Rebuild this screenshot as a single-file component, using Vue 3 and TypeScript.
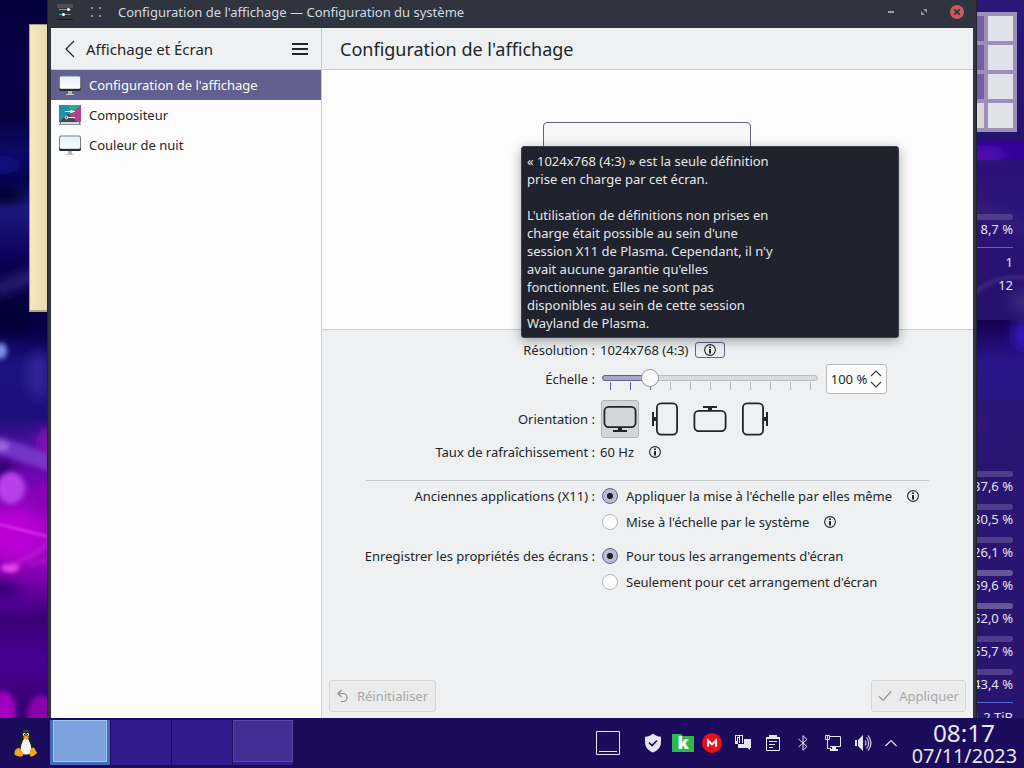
<script setup lang="ts">
interface Orientation {
  name: string
  rotation: number
  active: boolean
}

const sidebarItems = [
  { label: "Configuration de l'affichage", icon: 'monitor', active: true },
  { label: 'Compositeur', icon: 'compositor', active: false },
  { label: 'Couleur de nuit', icon: 'monitor', active: false },
]

const tooltipLines: string[] = [
  "L'utilisation de définitions non prises en",
  "charge était possible au sein d'une",
  "session X11 de Plasma. Cependant, il n'y",
  "avait aucune garantie qu'elles",
  'fonctionnent. Elles ne sont pas',
  'disponibles au sein de cette session',
  'Wayland de Plasma.',
]

const orientations: Orientation[] = [
  { name: 'normal', rotation: 0, active: true },
  { name: 'left', rotation: 90, active: false },
  { name: 'inverted', rotation: 180, active: false },
  { name: 'right', rotation: 270, active: false },
]

const ticks: number[] = Array.from({ length: 11 }, (_, i) => i)
const usage: string[] = ['37,6 %', '30,5 %', '26,1 %', '59,6 %', '52,0 %', '55,7 %', '43,4 %']
const pagerCells: boolean[] = [true, false, true, false, true, false, false, false]
</script>

<template>
  <div class="desktop">
    <svg class="wallpaper" width="1024" height="718" viewBox="0 0 1024 718">
      <defs>
        <linearGradient id="wl" x1="0" y1="0" x2="0" y2="1">
          <stop offset="0" stop-color="#04003a" />
          <stop offset="0.1" stop-color="#0a0048" />
          <stop offset="0.16" stop-color="#050040" />
          <stop offset="0.21" stop-color="#0d0a62" />
          <stop offset="0.25" stop-color="#06024a" />
          <stop offset="0.29" stop-color="#1c1a80" />
          <stop offset="0.36" stop-color="#0d0058" />
          <stop offset="0.42" stop-color="#05003c" />
          <stop offset="0.46" stop-color="#070048" />
          <stop offset="0.51" stop-color="#1a1382" />
          <stop offset="0.58" stop-color="#1c0f7a" />
          <stop offset="0.62" stop-color="#4a10a0" />
          <stop offset="0.67" stop-color="#7604b2" />
          <stop offset="0.72" stop-color="#a203c8" />
          <stop offset="0.77" stop-color="#a402c2" />
          <stop offset="0.81" stop-color="#7600a8" />
          <stop offset="0.86" stop-color="#3a0078" />
          <stop offset="0.92" stop-color="#4b0091" />
          <stop offset="1" stop-color="#32006c" />
        </linearGradient>
        <linearGradient id="wr" x1="0" y1="0" x2="0" y2="1">
          <stop offset="0" stop-color="#2a1878" />
          <stop offset="0.195" stop-color="#25136c" />
          <stop offset="0.2" stop-color="#32009a" />
          <stop offset="0.3" stop-color="#3c0b98" />
          <stop offset="0.45" stop-color="#170053" />
          <stop offset="0.5" stop-color="#281489" />
          <stop offset="0.56" stop-color="#2a1785" />
          <stop offset="1" stop-color="#281268" />
        </linearGradient>
        <filter id="b3" filterUnits="userSpaceOnUse" x="-40" y="0" width="1100" height="760"><feGaussianBlur stdDeviation="2.5" /></filter>
        <filter id="b5" filterUnits="userSpaceOnUse" x="-40" y="0" width="1100" height="760"><feGaussianBlur stdDeviation="6" /></filter>
        <filter id="b1" filterUnits="userSpaceOnUse" x="-40" y="0" width="1100" height="760"><feGaussianBlur stdDeviation="1" /></filter>
      </defs>
      <rect width="100" height="718" fill="url(#wl)" />
      <rect x="960" width="64" height="718" fill="url(#wr)" />
      <g filter="url(#b5)">
        <ellipse cx="2" cy="165" rx="20" ry="9" fill="#1218a0" opacity=".6" />
        <ellipse cx="5" cy="195" rx="18" ry="8" fill="#01002c" />
        <path d="M-5 285L50 262V276L-5 296z" fill="#3a2c8c" opacity=".8" />
        <ellipse cx="38" cy="375" rx="12" ry="24" fill="#34269c" opacity=".8" />
        <ellipse cx="12" cy="318" rx="20" ry="14" fill="#020034" />
        <ellipse cx="2" cy="468" rx="13" ry="7" fill="#23005f" />
        <ellipse cx="48" cy="445" rx="12" ry="18" fill="#8310b2" />
        <ellipse cx="14" cy="535" rx="26" ry="24" fill="#ba04d6" />
        <ellipse cx="12" cy="600" rx="22" ry="8" fill="#500096" />
        <ellipse cx="46" cy="500" rx="10" ry="16" fill="#8900b5" />
        <ellipse cx="2" cy="588" rx="17" ry="6" fill="#27006a" />
      </g>
      <g filter="url(#b3)">
        <path d="M-8 435Q24 443 56 458V473Q20 462 -8 451z" fill="#8040d0" opacity=".75" />
        <ellipse cx="1" cy="446" rx="8" ry="5" fill="#b27aef" opacity=".7" />
        <ellipse cx="11" cy="488" rx="14" ry="16" fill="#b740ea" />
        <ellipse cx="1" cy="351" rx="6" ry="8" fill="#7f90e8" />
        <ellipse cx="3" cy="711" rx="13" ry="20" fill="#a000bd" />
        <ellipse cx="42" cy="716" rx="15" ry="21" fill="#8800ad" />
        <ellipse cx="10" cy="568" rx="9" ry="4" fill="#ff50f6" />
        <path d="M8 566Q34 558 52 540" fill="none" stroke="#c520dd" stroke-width="3" />
        <path d="M28 566Q38 561 52 560" fill="none" stroke="#a719c9" stroke-width="3" />
      </g>
      <path d="M-6 523L54 538" stroke="#e034ee" stroke-width="3" opacity=".75" filter="url(#b1)" />
      <g filter="url(#b5)">
        <ellipse cx="985" cy="155" rx="20" ry="6" fill="#5b19bc" />
        <ellipse cx="1022" cy="302" rx="11" ry="11" fill="#8a7ac8" />
        <ellipse cx="1024" cy="335" rx="12" ry="15" fill="#3919bd" />
        <path d="M960 198Q1000 206 1030 228V240Q1000 220 960 210z" fill="#6a46a8" />
        <ellipse cx="979" cy="425" rx="8" ry="9" fill="#5b12a0" />
      </g>
      <path d="M976 292Q996 274 1030 278" fill="none" stroke="#7459aa" stroke-width="5" filter="url(#b1)" />
    </svg>

    <div class="note"></div>

    <div class="pager">
      <span v-for="(dim, i) in pagerCells" :key="i" :class="['pager-cell', { dim, grey: i === 6 }]"></span>
    </div>

    <div class="monitor cpu">
      <div class="meter"></div>
      <div class="value first">8,7 %</div>
      <div class="rule"></div>
      <div class="value">1</div>
      <div class="value">12</div>
    </div>

    <div class="monitor disks">
      <div v-for="(u, i) in usage" :key="i" class="disk">
        <div class="meter"></div>
        <div class="disk-value">{{ u }}</div>
      </div>
      <div class="rule"></div>
      <div class="disk-value total">1,2 TiB</div>
    </div>

    <main class="window">
      <header class="titlebar">
        <svg class="app-icon" width="16" height="16" viewBox="0 0 16 16">
          <rect width="16" height="16" rx="1" fill="#2d3439" />
          <rect width="16" height="4" rx="1" fill="#4b5157" />
          <rect y="15" width="16" height="1" fill="#191d20" />
          <path d="M2 5.5h12" stroke="#3daee9" />
          <path d="M12 5.5h2M2 10.500h12" stroke="#778087" />
          <path d="M2 10.500h5" stroke="#3daee9" />
          <circle cx="11.500" cy="5.500" r="1.500" fill="#fff" />
          <circle cx="6.500" cy="10.500" r="1.500" fill="#fff" />
        </svg>
        <svg class="grip" width="12" height="12" viewBox="0 0 12 12" fill="#8e949d">
          <path d="M1 1h2v2H1zM9 1h2v2H9zM1 9h2v2H1zM9 9h2v2H9z" />
        </svg>
        <span class="window-title">Configuration de l'affichage — Configuration du système</span>
        <svg class="controls" width="80" height="16" viewBox="0 0 80 16">
          <rect x="4" y="7" width="6" height="2" fill="#9aa0a8" />
          <path d="M39 5h4v4zM37 7v4h4z" fill="#9299a1" />
          <circle cx="73" cy="8" r="7" fill="#cc575d" />
          <path d="M70.300 5.300l5.400 5.400M75.700 5.300l-5.400 5.400" stroke="#2f343f" stroke-width="1.700" />
        </svg>
      </header>

      <div class="body">
        <aside class="sidebar">
          <div class="side-head">
            <svg width="12" height="18" viewBox="0 0 12 18">
              <path d="M10 1L2 9l8 8" fill="none" stroke="#232629" stroke-width="1.200" />
            </svg>
            <span class="side-title">Affichage et Écran</span>
            <svg width="16" height="12" viewBox="0 0 16 12" fill="#232629">
              <path d="M0 0h16v2H0zM0 5h16v2H0zM0 10h16v2H0z" />
            </svg>
          </div>
          <div v-for="item in sidebarItems" :key="item.label" :class="['side-item', { active: item.active }]">
            <svg v-if="item.icon === 'monitor'" width="22" height="22" viewBox="0 0 22 22">
              <defs>
                <linearGradient id="scr" x1="0" y1="0" x2="0" y2="1">
                  <stop offset="0" stop-color="#e4f2fb" />
                  <stop offset="1" stop-color="#fdfdfe" />
                </linearGradient>
              </defs>
              <rect x="9" y="17" width="4" height="3" fill="#b5b8bb" />
              <rect x="7" y="20" width="8" height="1" fill="#c6c8ca" />
              <rect x="0" y="1.500" width="22" height="15.500" rx="2" fill="#767b80" />
              <path d="M0 14.500h22V15a2 2 0 0 1-2 2H2a2 2 0 0 1-2-2z" fill="#292c2f" />
              <rect x="1" y="2.500" width="20" height="12.200" rx="1" fill="url(#scr)" />
            </svg>
            <svg v-else width="22" height="22" viewBox="0 0 22 22">
              <rect y="1" width="22" height="17" fill="#228fab" />
              <path d="M9 1h13L13 9z" fill="#25ae96" />
              <path d="M22 1v17H17L10 11z" fill="#af4389" />
              <path d="M0 18l9-8 9 8z" fill="#3d4b55" />
              <path d="M6 7.500h10M7 13.500h9" stroke="#fff" stroke-width="1" />
              <circle cx="12.500" cy="7.500" r="1.500" fill="#fff" />
              <circle cx="7.500" cy="13.500" r="1.300" fill="#3d4b55" stroke="#fff" />
              <rect y="18" width="22" height="2" fill="#d5d6d8" />
              <rect y="20" width="22" height="1" fill="#8d9093" />
              <path d="M1 18h1v2H1zM20 18h1v2h-1z" fill="#77797b" />
            </svg>
            <span>{{ item.label }}</span>
          </div>
        </aside>

        <section class="page">
          <h1 class="page-title">Configuration de l'affichage</h1>
          <div class="preview">
            <div class="output"></div>
          </div>
          <div class="form">
            <div class="row resolution">
              <span class="label">Résolution :</span>
              <span>1024x768 (4:3)</span>
              <span class="info-button">
                <svg class="info" width="12" height="12" viewBox="0 0 12 12"><circle cx="6" cy="6" r="5.400" /><path d="M5 2.500h2v1.400H5zM5 5h2v4.500H5z" /></svg>
              </span>
            </div>
            <div class="row scale">
              <span class="label">Échelle :</span>
              <svg class="slider" width="220" height="24" viewBox="0 0 220 24">
                <rect x="2.500" y="7.500" width="215" height="5" rx="2.500" fill="#d9dadb" stroke="#babcbe" />
                <path d="M50 7.500H5a2.500 2.500 0 0 0 0 5h45z" fill="#a9a5c7" stroke="#62608f" />
                <rect
                  v-for="t in ticks"
                  :key="t"
                  :x="10 + t * 20"
                  y="14"
                  width="1"
                  height="8"
                  :fill="t < 3 ? '#5f5c98' : '#b4b6b8'"
                />
                <circle cx="50" cy="10" r="8.500" fill="#f8f8f8" stroke="#96989a" />
              </svg>
              <span class="spin">
                <span>100 %</span>
                <svg width="12" height="18" viewBox="0 0 12 18" fill="none" stroke="#3c3f42" stroke-width="1.200">
                  <path d="M1 6l5-5 5 5M1 12l5 5 5-5" />
                </svg>
              </span>
            </div>
            <div class="row orientation">
              <span class="label">Orientation :</span>
              <span v-for="o in orientations" :key="o.name" :class="['orient', { active: o.active }]">
                <svg width="34" height="34" viewBox="-17 -17 34 34">
                  <g :transform="`rotate(${o.rotation})`">
                    <rect x="-15.600" y="-12.100" width="31.200" height="20.200" rx="4.300" fill="none" stroke="#232629" stroke-width="1.800" />
                    <path d="M-2 9h4v2h5v2h-14v-2h5z" fill="#232629" />
                  </g>
                </svg>
              </span>
            </div>
            <div class="row refresh">
              <span class="label">Taux de rafraîchissement :</span>
              <span>60 Hz</span>
              <svg class="info" width="12" height="12" viewBox="0 0 12 12"><circle cx="6" cy="6" r="5.400" /><path d="M5 2.500h2v1.400H5zM5 5h2v4.500H5z" /></svg>
            </div>
            <div class="separator"></div>
            <div class="row radio-row">
              <span class="label">Anciennes applications (X11) :</span>
              <span class="radio on"></span>
              <span>Appliquer la mise à l'échelle par elles même</span>
              <svg class="info" width="12" height="12" viewBox="0 0 12 12"><circle cx="6" cy="6" r="5.400" /><path d="M5 2.500h2v1.400H5zM5 5h2v4.500H5z" /></svg>
            </div>
            <div class="row radio-row">
              <span class="label"></span>
              <span class="radio"></span>
              <span>Mise à l'échelle par le système</span>
              <svg class="info" width="12" height="12" viewBox="0 0 12 12"><circle cx="6" cy="6" r="5.400" /><path d="M5 2.500h2v1.400H5zM5 5h2v4.500H5z" /></svg>
            </div>
            <div class="row radio-row group">
              <span class="label">Enregistrer les propriétés des écrans :</span>
              <span class="radio on"></span>
              <span>Pour tous les arrangements d'écran</span>
            </div>
            <div class="row radio-row">
              <span class="label"></span>
              <span class="radio"></span>
              <span>Seulement pour cet arrangement d'écran</span>
            </div>
            <footer class="actions">
              <span class="button">
                <svg width="12" height="14" viewBox="0 0 12 14" fill="none" stroke="#8f9193" stroke-width="1.200">
                  <path d="M4.500 1L1 4.500 4.500 8M1 4.500h5a4 4 0 0 1 0 8H4" />
                </svg>
                <span>Réinitialiser</span>
              </span>
              <span class="button apply">
                <svg width="14" height="12" viewBox="0 0 14 12" fill="none" stroke="#8f9193" stroke-width="1.200">
                  <path d="M1 6.500l4 4L13 1.500" />
                </svg>
                <span>Appliquer</span>
              </span>
            </footer>
          </div>
        </section>
      </div>
    </main>

    <div class="tooltip">
      <div>« 1024x768 (4:3) » est la seule définition</div>
      <div>prise en charge par cet écran.</div>
      <div class="blank"></div>
      <div v-for="line in tooltipLines" :key="line">{{ line }}</div>
    </div>

    <nav class="taskbar">
      <svg class="tux" width="24" height="30" viewBox="0 0 24 30">
        <path d="M12 1c-3 0-4.500 2-4.400 5 .1 3 .2 4-1.600 7C4 16 2.500 20 4 24l8 3 8-3c1.500-4 0-8-2-11-1.800-3-1.500-4-1.600-7C16.300 3 15 1 12 1z" fill="#1c2022" />
        <path d="M12 2c-2 0-3 1-3.200 2.200 1.800-1 4.500-1 6.400 0C15 3 14 2 12 2z" fill="#4a5053" />
        <path d="M12 9c-2 1-2.500 2.500-3.800 5.500C6.500 18 6 22 8 25.500c2 1.300 6 1.300 8 0 2-3.500 1.500-7.500-.2-11C14.500 11.500 14 10 12 9z" fill="#f1f2f4" />
        <ellipse cx="10.300" cy="6.500" rx="1.300" ry="1.800" fill="#fff" /><ellipse cx="13.700" cy="6.500" rx="1.300" ry="1.800" fill="#fff" />
        <circle cx="10.600" cy="6.800" r=".7" /><circle cx="13.300" cy="6.800" r=".7" />
        <path d="M9 9c1-1.500 5-1.500 6.300 0-.6 1.700-2 2.500-3.200 2.500S9.500 10.500 9 9z" fill="#f59a18" />
        <path d="M4 20c1.500-.5 3 1.500 4.500 4 1.500 2.500.5 4.500-1.500 4.500S2 28 .8 26.500C0 25 1 24 1 22.500 1 21 3 21.500 4 20zM20 20c-1.500-.8-3.500.5-4 3-.3 2-1 5.500 1.500 5.500 2 0 3.500-2 5-3 1-1 .3-1.500-.5-2.500C21 22 21.500 20.500 20 20z" fill="#f7a520" />
      </svg>
      <div class="tasks">
        <span class="task current"><i></i></span>
        <span class="task"></span>
        <span class="task"></span>
        <span class="task raised"><i></i></span>
      </div>
      <div class="tray">
        <svg class="show-desktop" width="24" height="24" viewBox="0 0 24 24"><path d="M.5.5h23v23H.5zM3 20.500h18" fill="none" stroke="#e8e6f0" /></svg>
        <span class="cell">
          <svg width="18" height="20" viewBox="0 0 18 20">
            <path d="M9 .5c2 2 4.500 3 8 3.200V9c0 5-3 8.500-8 10.500C4 17.500 1 14 1 9V3.700C4.500 3.500 7 2.500 9 .5z" fill="#e6e4ee" />
            <path d="M5 9.500l3 3 5-5" fill="none" stroke="#1b0b5b" stroke-width="1.600" />
          </svg>
        </span>
        <span class="cell folder-cell">
          <svg class="folder" width="22" height="20" viewBox="0 0 22 20">
            <path d="M0 1h9l2 2h11v16H0z" fill="#2fb94d" />
          </svg>
          <b class="k-letter">k</b>
        </span>
        <span class="cell mega">
          <svg width="20" height="20" viewBox="0 0 20 20">
            <circle cx="10" cy="10" r="10" fill="#ec0e19" />
            <path d="M6 13.800V7.500l4 3.900 4-3.900v6.300" fill="none" stroke="#fff" stroke-width="2.100" />
          </svg>
        </span>
        <span class="cell">
          <svg width="16" height="16" viewBox="0 0 16 16" fill="#e6e4ee">
            <path d="M0 0h8v8H7V1H5v7H4V3H3v6H0z" />
            <path d="M9 4h7v9h-1v2l-2.500-2H9z" />
            <path d="M1 1h3v1H2v4H1zM5 1h1v7H5z" fill="#1b0b5b" />
            <path d="M3 9h6v4H3z" />
          </svg>
        </span>
        <span class="cell">
          <svg width="14" height="16" viewBox="0 0 14 16">
            <path d="M.5 2.500h13v13H.5z" fill="none" stroke="#e6e4ee" />
            <path d="M3 0h8v4H3zM0 2h14v2H0zM3 6h8v1H3zM3 9h6v1H3zM3 12h4v1H3z" fill="#e6e4ee" />
          </svg>
        </span>
        <span class="cell">
          <svg width="10" height="16" viewBox="0 0 10 16"><path d="M.5 4l8.500 7.500L5 15.300V.7L9 4.500.5 12" fill="none" stroke="#e6e4ee" /></svg>
        </span>
        <span class="cell">
          <svg width="16" height="16" viewBox="0 0 16 16">
            <path d="M5 1.500h10.500v10H5M2.500 5v8.500H6M.5.500h4v4h-4zM2.500 1v3" fill="none" stroke="#e6e4ee" />
            <path d="M7 12h4v2h2v2H5v-2h2z" fill="#e6e4ee" />
          </svg>
        </span>
        <span class="cell">
          <svg width="17" height="16" viewBox="0 0 17 16">
            <path d="M0 5h2v6H0zM3 5l5-5v16l-5-5z" fill="#e6e4ee" />
            <path d="M10 5.500q2 2.500 0 5M11.500 2.500q4.500 5.500 0 11M13 .5q6 7.500 0 15" fill="none" stroke="#e6e4ee" stroke-width="1.100" />
          </svg>
        </span>
        <span class="cell chevron">
          <svg width="12" height="8" viewBox="0 0 12 8"><path d="M.5 7L6 1.500 11.500 7" fill="none" stroke="#e6e4ee" stroke-width="1.200" /></svg>
        </span>
      </div>
      <div class="clock">
        <div class="time">08:17</div>
        <div class="date">07/11/2023</div>
      </div>
    </nav>
  </div>
</template>

<style>
body {
  margin: 0;
  overflow: hidden;
}
</style>

<style scoped>
.desktop {
  position: relative;
  width: 1024px;
  height: 768px;
  overflow: hidden;
  background: #1b0b5b;
  color: #232629;
  font-family: 'Noto Sans', sans-serif;
  font-size: 13px;
  line-height: 18px;
  white-space: nowrap;
}
svg {
  display: block;
  flex: none;
}
.wallpaper {
  position: absolute;
  left: 0;
  top: 0;
}
.note {
  position: absolute;
  left: 29px;
  top: 24px;
  width: 30px;
  height: 288px;
  box-sizing: border-box;
  background: linear-gradient(90deg, #f7e7c0, #e8dab2 60%);
  border: 1px solid #a39b86;
  border-bottom: 2px solid #b1a588;
}
.pager {
  position: absolute;
  left: 955px;
  top: 12px;
  width: 62px;
  height: 120px;
  box-sizing: border-box;
  padding: 4px;
  display: grid;
  grid-template-columns: 25px 25px;
  grid-template-rows: repeat(4, 25px);
  gap: 4px;
  background: #9c90bb;
}
.pager-cell {
  background: #e1e1ea;
}
.pager-cell.dim {
  background: #71609e;
}
.pager-cell.grey {
  background: #d8d8d9;
}
.monitor {
  position: absolute;
  left: 940px;
  width: 84px;
  box-sizing: border-box;
  padding-right: 11px;
  overflow: hidden;
  color: #e6e2f0;
  text-align: right;
  background: rgba(42, 22, 112, 0.82);
}
.cpu {
  top: 160px;
  height: 160px;
  padding-top: 54px;
}
.disks {
  top: 400px;
  height: 318px;
  padding-top: 71px;
}
.meter {
  height: 6px;
  border-radius: 3px;
  background: #4f3c8b;
}
.value {
  height: 23px;
  line-height: 23px;
}
.value.first {
  height: 27px;
  line-height: 19px;
}
.rule {
  height: 1px;
  background: #5a64cf;
}
.rule + .value {
  padding-top: 3px;
}
.disk {
  height: 33px;
}
.disk-value {
  line-height: 19px;
}
.disk:nth-child(4) .meter,
.disk:nth-child(5) .meter {
  background: #665798;
}
.total {
  padding-top: 5px;
}
.window {
  position: absolute;
  left: 47px;
  top: 0;
  width: 930px;
  height: 718px;
  box-sizing: border-box;
  border: 0 solid #1f232b;
  border-width: 0 1px;
  padding: 0 3px;
  background: #2f343f;
}
.titlebar {
  height: 28px;
  display: flex;
  align-items: center;
  box-sizing: border-box;
  padding: 0 9px 4px 6px;
  color: #d3dae3;
}
.grip {
  margin-left: 17px;
}
.window-title {
  flex: 1;
  margin-left: 16px;
}
.body {
  display: flex;
  height: 690px;
}
.sidebar {
  width: 270px;
  flex: none;
  background: #fcfcfc;
  border-right: 1px solid #cbcccf;
}
.side-head {
  height: 41px;
  display: flex;
  align-items: center;
  padding: 0 13px;
  background: #eff0f1;
  border-bottom: 1px solid #cbcccf;
}
.side-title {
  flex: 1;
  margin-left: 10px;
  font-size: 15px;
}
.side-item {
  height: 30px;
  display: flex;
  align-items: center;
  gap: 8px;
  padding-left: 8px;
}
.side-item.active {
  background: #62608f;
  color: #fcfcfc;
}
.page {
  flex: 1;
  display: flex;
  flex-direction: column;
  background: #eff0f1;
}
.page-title {
  margin: 0;
  height: 41px;
  flex: none;
  padding-left: 18px;
  border-bottom: 1px solid #cbcccf;
  font-size: 18px;
  font-weight: 400;
  line-height: 42px;
}
.preview {
  height: 259px;
  flex: none;
  background: #fcfcfc;
  border-bottom: 1px solid #cbcccf;
}
.output {
  width: 206px;
  height: 154px;
  margin: 52px 0 0 221px;
  border: 1px solid #62608f;
  border-radius: 4px;
  background: #f7f7f7;
}
.form {
  flex: 1;
  display: flex;
  flex-direction: column;
  padding-top: 6px;
}
.row {
  display: flex;
  align-items: center;
  flex: none;
}
.label {
  width: 273px;
  flex: none;
  margin-right: 5px;
  text-align: right;
}
.resolution {
  height: 28px;
}
.info-button {
  width: 28px;
  height: 14px;
  margin-left: 7px;
  display: flex;
  align-items: center;
  justify-content: center;
  border: 1px solid #62608f;
  border-radius: 3px;
}
.info circle {
  fill: none;
  stroke: #232629;
  stroke-width: 1.1px;
}
.info path {
  fill: #232629;
}
.scale {
  height: 30px;
}
.slider {
  margin-top: 2px;
}
.spin {
  width: 59px;
  height: 28px;
  margin-left: 6px;
  display: flex;
  align-items: center;
  gap: 3px;
  justify-content: center;
  border: 1px solid #b9bbbd;
  border-radius: 3px;
  background: #fcfcfc;
}
.orientation {
  height: 38px;
  margin-top: 6px;
}
.orient {
  width: 36px;
  height: 36px;
  margin-left: 1px;
  margin-right: 6px;
  display: flex;
  align-items: center;
  justify-content: center;
  border: 1px solid transparent;
  border-radius: 3px;
}
.orient.active {
  border-color: #b0b2b4;
  background: #d4d5d6;
}
.refresh {
  height: 28px;
}
.refresh .info,
.radio-row .info {
  margin-left: 15px;
}
.separator {
  width: 563px;
  height: 1px;
  flex: none;
  margin: 14px 0 3px 44px;
  background: #c9cacd;
}
.radio-row {
  height: 24px;
  margin-bottom: 2px;
}
.radio-row.group {
  margin-top: 8px;
}
.radio {
  width: 14px;
  height: 14px;
  margin: 0 8px 0 2px;
  border: 1px solid #b4b6b8;
  border-radius: 50%;
  background: #fcfcfc;
}
.radio.on {
  border-color: #62608f;
  background: radial-gradient(circle, #232629 0 2.8px, #bebcd3 3.4px);
}
.actions {
  margin-top: auto;
  padding: 0 7px 6px;
  display: flex;
  justify-content: space-between;
}
.button {
  width: 105px;
  height: 30px;
  display: flex;
  align-items: center;
  justify-content: center;
  gap: 8px;
  border: 1px solid #d5d6d7;
  border-radius: 3px;
  background: #ebebec;
  color: #a7a8a9;
}
.button.apply {
  width: 93px;
  gap: 7px;
}
.tooltip {
  position: absolute;
  left: 521px;
  top: 146px;
  width: 378px;
  height: 192px;
  box-sizing: border-box;
  padding: 5px;
  border: 1px solid #3a3f50;
  border-radius: 3px;
  background: #20222d;
  color: #e6e7ea;
  box-shadow: 0 3px 12px rgba(0, 0, 0, 0.35);
}
.blank {
  height: 18px;
}
.taskbar {
  position: absolute;
  left: 0;
  top: 718px;
  width: 1024px;
  height: 50px;
  display: flex;
  background: #1b0b5b;
  color: #e8e6f0;
}
.tux {
  margin: 10px 12px 0 14px;
}
.tasks {
  display: flex;
  gap: 1px;
  padding-top: 2px;
}
.task {
  width: 60px;
  height: 45px;
  background: #321c8d;
}
.task i {
  display: block;
  height: 42px;
  box-sizing: border-box;
  border: 1px solid #5a46a7;
  background: #432d94;
}
.task.current {
  background: #4a6abb;
}
.task.current i {
  margin: 0 3px;
  border-color: #a1c3f2;
  background: #7ca2de;
}
.tray {
  width: 312px;
  margin-left: 303px;
  height: 50px;
  display: flex;
  align-items: center;
}
.show-desktop {
  margin-right: 18px;
}
.cell {
  width: 30px;
  flex: none;
  display: grid;
  place-items: center;
}
.folder,
.k-letter {
  grid-area: 1 / 1;
}
.mega {
  padding-right: 2px;
  width: 28px;
}
.chevron {
  width: 26px;
}
.k-letter {
  color: #fff;
  font-size: 17px;
  font-weight: 900;
  line-height: 20px;
}
.clock {
  flex: 1;
  margin-right: 7px;
  text-align: right;
}
.time {
  height: 28px;
  padding-right: 22px;
  font-size: 24.3px;
  line-height: 28px;
  padding-top: 1px;
  box-sizing: border-box;
}
.date {
  font-size: 19.8px;
  line-height: 20px;
}
</style>
